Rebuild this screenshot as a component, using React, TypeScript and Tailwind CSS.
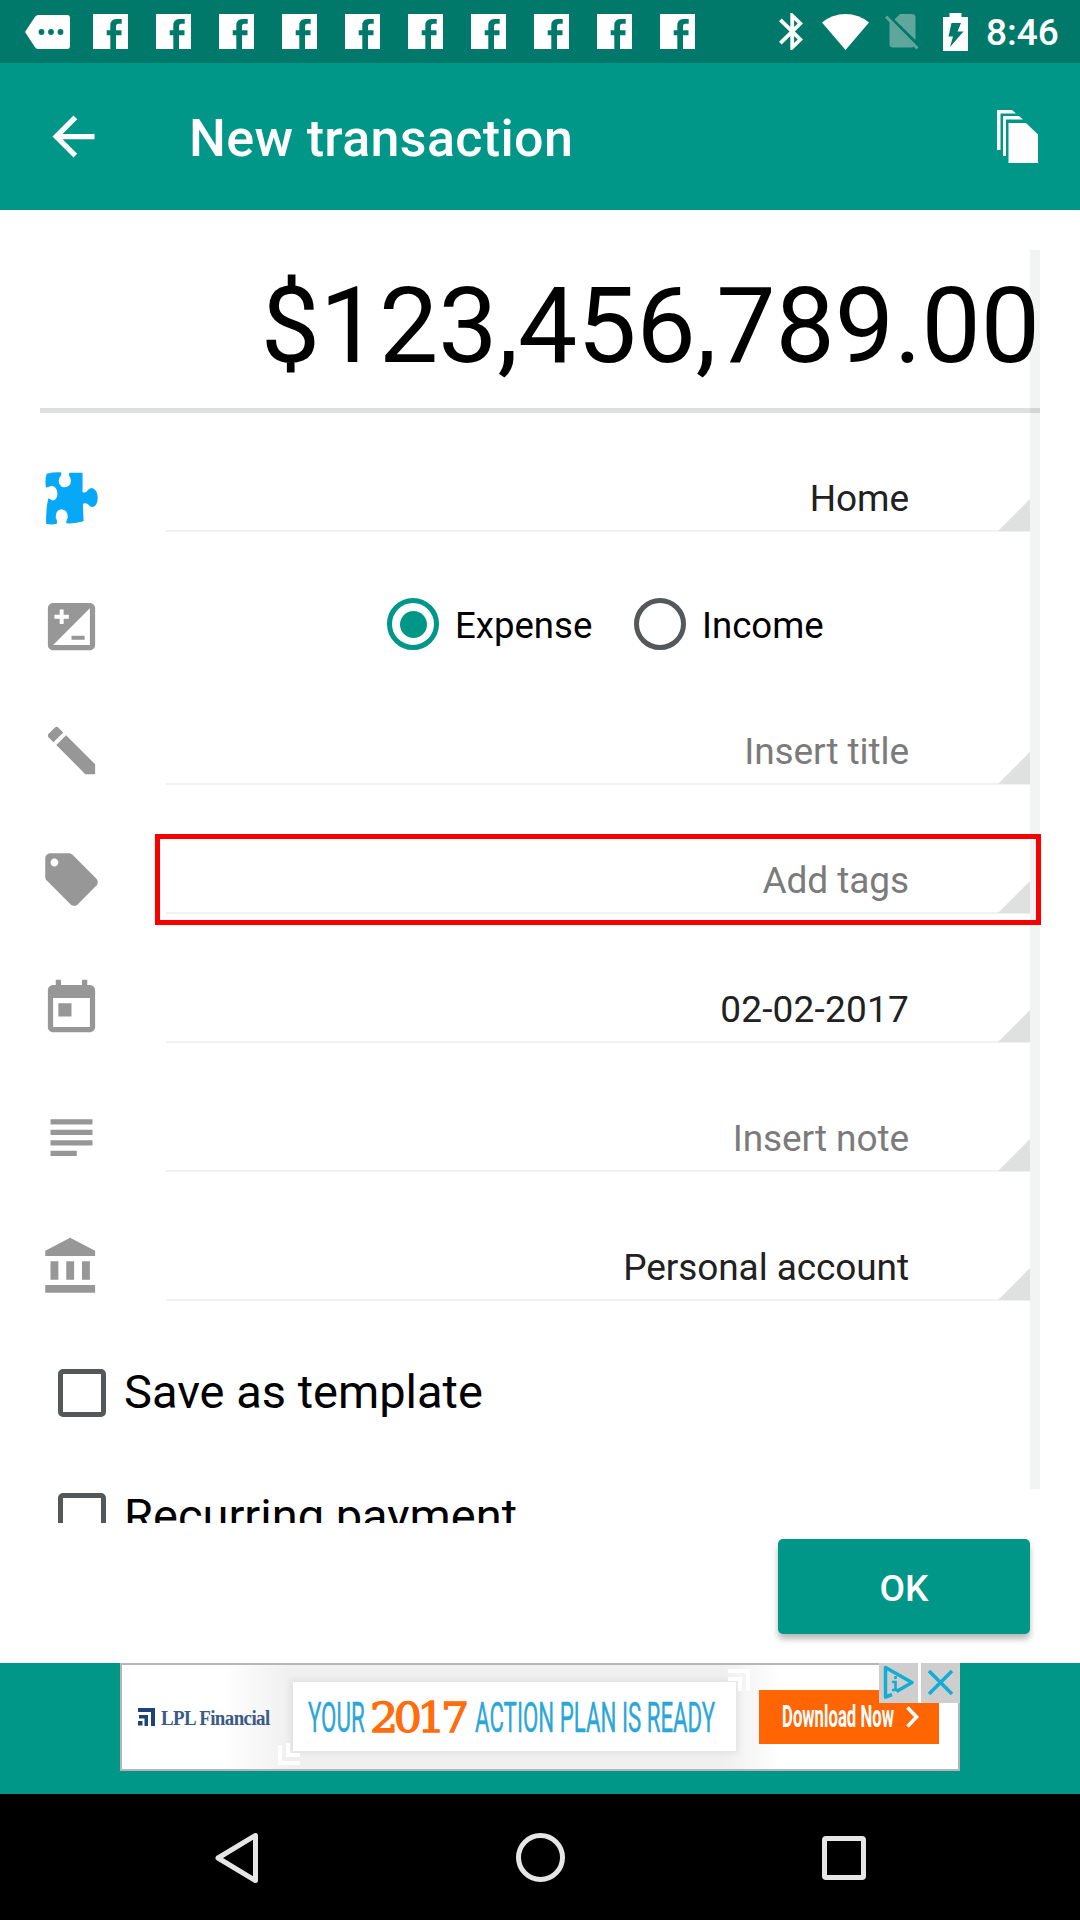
import type { ReactNode } from "react";

const GREY = "#979797";

function Glyph({ d, className = "" }: { d: string; className?: string }) {
  return (
    <svg viewBox="0 0 24 24" className={"h-[63px] w-[63px] " + className} fill={GREY}>
      <path d={d} />
    </svg>
  );
}

function FacebookIcon() {
  return (
    <svg viewBox="0 0 35 35" className="h-[35px] w-[35px]">
      <path fill="#fff" d="M0 0H35V35H23V21.3H28.5V16.3H23V12.5Q23 9.8 25.5 9.8H28.7V5H23.5Q17.3 5 17.3 11.5V16.3H13.7V21.3H17.3V35H0Z" />
    </svg>
  );
}

function StatusBar() {
  return (
    <header className="flex h-[63px] items-center bg-[#00796b] pl-[25px]">
      <svg viewBox="0 0 45 34" className="h-[34px] w-[45px]">
        <path fill="#fff" d="M13 0H42Q45 0 45 3V31Q45 34 42 34H13Q11 34 9.500 31.500L0 17L9.500 2.500Q11 0 13 0Z" />
        <g fill="#00796b">
          <circle cx="16.500" cy="17" r="2.900" />
          <circle cx="26" cy="17" r="2.900" />
          <circle cx="35.500" cy="17" r="2.900" />
        </g>
      </svg>
      <div className="ml-[23px] flex gap-[28px]">
        {Array.from({ length: 10 }, (_, i) => (
          <FacebookIcon key={i} />
        ))}
      </div>
      <svg viewBox="5 2 12.710 20" preserveAspectRatio="none" className="ml-[84px] h-[37px] w-[24px]" fill="#fff">
        <path d="M17.710 7.710L12 2h-1v7.590L6.410 5 5 6.410 10.590 12 5 17.590 6.410 19 11 14.410V22h1l5.710-5.710-4.300-4.290 4.300-4.290zM13 5.830l1.880 1.880L13 9.590V5.830zm1.880 10.460L13 18.170v-3.760l1.880 1.880z" />
      </svg>
      <svg viewBox="0 0 47 36" className="ml-[19px] h-[36px] w-[47px]" fill="#fff">
        <path d="M0 8.500Q10 0 23.500 0T47 8.500L23.500 36Z" />
      </svg>
      <svg viewBox="0 0 34 37" className="ml-[16px] h-[37px] w-[34px]" fill="#5fa69c">
        <path d="M15 1H27Q30.500 1 30.500 4.500V27L9.500 6.500Z" />
        <path d="M4.500 9L29 33.500Q28 34.500 26.500 34.500H8Q4.500 34.500 4.500 31.500Z" />
        <path d="M2 2.500L0 4.800L31.500 36.500L33.500 34.300Z" />
      </svg>
      <svg viewBox="0 0 25 38" className="ml-[24px] h-[38px] w-[25px]">
        <path fill="#fff" d="M6.500 0H18.500V4H25V38H0V4H6.500Z" />
        <path fill="#00796b" d="M8.500 10H18L14.500 18.500H20.500L7 34L10 23.500H5.500Z" />
      </svg>
      <span className="mt-[3px] ml-[18px] text-[37px] leading-[44px] font-medium text-white">8:46</span>
    </header>
  );
}

function Toolbar() {
  return (
    <div className="flex h-[147px] items-center bg-[#009688] pr-[42px] pl-[42px]">
      <svg viewBox="0 0 24 24" className="h-[63px] w-[63px]" fill="#fff">
        <path d="M20 11H7.830l5.590-5.590L12 4l-8 8 8 8 1.410-1.410L7.830 13H20v-2z" />
      </svg>
      <h1 className="ml-[84px] flex-1 pt-[5px] text-[52px] leading-[60px] font-medium tracking-[0.35px] text-white">New transaction</h1>
      <svg viewBox="0 0 41 53" className="h-[53px] w-[41px]" fill="#fff">
        <path d="M0 0H15L19 3.500H3.500V40H0Z" />
        <path d="M6 6H22L26 9.500H9V46H6Z" />
        <path d="M11.500 13H29L41 24.500V53H11.500Z" />
      </svg>
    </div>
  );
}

interface FieldProps {
  icon: ReactNode;
  value: string;
  hint?: boolean;
  highlighted?: boolean;
  height?: string;
  tracking?: string;
}

function Field({
  icon,
  value,
  hint = false,
  highlighted = false,
  height = "h-[129px]",
  tracking = "tracking-[-0.08px]",
}: FieldProps) {
  return (
    <div className={"flex items-end pr-[50px] pl-[40px] " + height}>
      <div className="mb-[3px] flex h-[63px] w-[63px] shrink-0 items-center justify-center">{icon}</div>
      <div className="relative ml-[63px] flex h-[64px] flex-1 items-end justify-end border-b-2 border-[#f1f1f1]">
        <span
          className={
            "mr-[90px] pr-[31px] pb-[9px] text-[37px] leading-[44px] " +
            tracking +
            (hint ? " text-[#7b7b7b]" : " text-[#212121]")
          }
        >
          {value}
        </span>
        <svg viewBox="0 0 32 32" className="absolute right-0 bottom-[-1px] h-[32px] w-[32px]" fill="#dfe0e0">
          <path d="M32 0V32H0Z" />
        </svg>
        {highlighted && (
          <div className="absolute right-[-11px] bottom-[-13px] z-10 h-[91px] w-[886px] border-[5px] border-[#f70000]" />
        )}
      </div>
    </div>
  );
}

function PuzzleIcon() {
  return (
    <svg viewBox="135 95 158 158" className="mt-[2px] h-[53px] w-[53px]" fill="#07a8f8">
      <path d="M140 100Q160 95 182 96Q187 103 178 112Q172 130 184 138Q195 144 206 136Q216 125 210 112Q204 104 208 97H247V155Q256 160 264 148Q274 138 284 148Q292 156 292 172Q292 190 282 198Q270 202 264 192Q256 186 248 190L250 242Q225 250 198 248Q198 242 203 230Q203 208 184 206Q166 208 167 232Q174 242 169 250Q152 253 138 249Q138 200 145 173Q153 177 158 180Q172 178 172 158Q170 138 155 136Q148 140 138 141Q134 120 140 100Z" />
    </svg>
  );
}

function CheckRow({ label }: { label: string }) {
  return (
    <label className="flex h-[124px] items-start pl-[58px]">
      <span className="h-[48px] w-[48px] shrink-0 rounded-[5px] border-[5px] border-[#54585b]" />
      <span className="mt-[-5px] ml-[18px] text-[47px] leading-[55px] whitespace-nowrap text-black">{label}</span>
    </label>
  );
}

function Form() {
  return (
    <main className="relative h-[1313px] overflow-hidden">
      <div className="ml-[40px] flex h-[203px] w-[1000px] items-end justify-end border-b-[5px] border-[#dedfdf] pb-[27px]">
        <span className="text-[105.500px] leading-[110px] tracking-[-0.1px] text-black">$123,456,789.00</span>
      </div>
      <Field height="h-[119px]" icon={<PuzzleIcon />} value="Home" />
      <div className="flex h-[124px] items-end pl-[40px]">
        <Glyph
          className="mb-[-2px]"
          d="M19 3H5c-1.100 0-2 .9-2 2v14c0 1.100.9 2 2 2h14c1.100 0 2-.9 2-2V5c0-1.100-.9-2-2-2zM5.500 7.500h2v-2H9v2h2V9H9v2H7.500V9h-2V7.500zM19 19H5L19 5v14zm-2-2v-1.500h-5V17h5z"
        />
        <div className="mb-[6px] ml-[284px] flex items-center">
          <span className="flex h-[52px] w-[52px] items-center justify-center rounded-full border-[5px] border-[#009688]">
            <span className="h-[27px] w-[27px] rounded-full bg-[#009688]" />
          </span>
          <span className="mt-[4px] ml-[16px] w-[179px] text-[36.600px] leading-[44px] text-black">Expense</span>
          <span className="h-[52px] w-[52px] rounded-full border-[5px] border-[#54585b]" />
          <span className="mt-[4px] ml-[16px] text-[36.600px] leading-[44px] text-black">Income</span>
        </div>
      </div>
      <Field
        hint
        value="Insert title"
        icon={
          <Glyph
            className="-scale-x-100"
            d="M3 17.250V21h3.750L17.810 9.940l-3.750-3.750L3 17.250zM20.710 7.040c.39-.39.39-1.020 0-1.410l-2.340-2.340c-.39-.39-1.020-.39-1.410 0l-1.830 1.830 3.750 3.750 1.830-1.830z"
          />
        }
      />
      <Field
        hint
        highlighted
        value="Add tags"
        icon={
          <Glyph d="M21.410 11.580l-9-9C12.050 2.220 11.550 2 11 2H4c-1.100 0-2 .9-2 2v7c0 .55.22 1.050.59 1.420l9 9c.36.36.86.58 1.410.58.55 0 1.050-.22 1.410-.59l7-7c.37-.36.59-.86.59-1.410 0-.55-.23-1.060-.59-1.420zM5.500 7C4.670 7 4 6.330 4 5.500S4.670 4 5.500 4 7 4.670 7 5.500 6.330 7 5.500 7z" />
        }
      />
      <Field
        value="02-02-2017"
        tracking="tracking-[0.2px]"
        icon={
          <Glyph d="M19 3h-1V1h-2v2H8V1H6v2H5c-1.110 0-1.990.9-1.990 2L3 19c0 1.100.89 2 2 2h14c1.100 0 2-.9 2-2V5c0-1.100-.9-2-2-2zm0 16H5V8h14v11zM7 10h5v5H7z" />
        }
      />
      <Field hint value="Insert note" icon={<Glyph d="M14 17H4v2h10v-2zm6-8H4v2h16V9zM4 15h16v-2H4v2zM4 5v2h16V5H4z" />} />
      <Field
        value="Personal account"
        icon={<Glyph d="M4 10v7h3v-7H4zm6 0v7h3v-7h-3zM2 22h19v-3H2v3zm14-12v7h3v-7h-3zm-4.500-9L2 6v2h19V6l-9.500-5z" />}
      />
      <div className="pt-[68px]">
        <CheckRow label="Save as template" />
        <CheckRow label="Recurring payment" />
      </div>
      <div className="absolute top-[40px] right-[40px] h-[1239px] w-[10px] bg-[#001a10]/5" />
    </main>
  );
}

function AdBanner() {
  return (
    <div className="flex h-[131px] justify-center bg-[#009688]">
      <div className="relative flex h-[108px] w-[840px] border-2 border-[#b5b6b6] bg-[linear-gradient(90deg,#fff_12%,#f0f0f0_20%,#f0f0f0_72%,#fff_79%)] text-[#2ba6d8]">
        <div className="mt-[43px] ml-[16px] flex h-[20px] w-[155px]">
          <svg viewBox="0 0 17 18" className="h-[18px] w-[17px]" fill="#1f4377">
            <path d="M0 0H17V18H13V4H0Z" />
            <path d="M1 7H10V18H6.500V10.500H1Z" />
            <path d="M0 13H4.500V17.500H0Z" />
          </svg>
          <span className="ml-[6px] origin-left scale-x-[0.945] font-['Liberation_Serif'] text-[20px] leading-[20px] font-bold tracking-[-0.6px] whitespace-nowrap text-[#3c5a86]">
            LPL Financial
          </span>
        </div>
        <div className="mt-[17px] flex h-[69px] w-[443px] bg-white pt-[13px] pl-[15px] shadow-[0_0_6px_3px_rgba(0,0,0,0.06)]">
          <span className="w-[62px] origin-left scale-x-[0.52] text-[43px] leading-[44px] whitespace-nowrap [-webkit-text-stroke:0.4px_#2ba6d8]">
            YOUR
          </span>
          <span className="w-[105px] origin-left scale-x-[1.080] font-['DejaVu_Serif'] text-[41px] leading-[46px] tracking-[-4.200px] whitespace-nowrap text-[#ff6d0c] [-webkit-text-stroke:1.300px_#ff6d0c]">
            2017
          </span>
          <span className="w-[100px] origin-left scale-x-[0.518] text-[43px] leading-[44px] whitespace-nowrap [-webkit-text-stroke:0.4px_#2ba6d8]">
            ACTION PLAN IS READY
          </span>
        </div>
        <svg viewBox="0 0 22 22" className="absolute top-[78px] left-[156px] h-[22px] w-[22px]" fill="none" stroke="#fff" strokeWidth="4">
          <path d="M2 2V20H22M10 0V12H22" />
        </svg>
        <svg viewBox="0 0 22 22" className="absolute top-[4px] left-[606px] h-[22px] w-[22px]" fill="none" stroke="#fff" strokeWidth="4">
          <path d="M0 2H20V22M0 10H12V22" />
        </svg>
        <div className="mt-[25px] ml-[23px] flex h-[54px] w-[180px] items-center bg-[#ff6502] pl-[23px]">
          <span className="w-[124px] origin-left scale-x-[0.54] text-[31px] leading-[34px] font-bold whitespace-nowrap text-white">
            Download Now
          </span>
          <svg viewBox="0 0 13 22" className="h-[22px] w-[13px]" fill="none" stroke="#fff" strokeWidth="3.600">
            <path d="M1.500 1.500L10.500 11L1.500 20.500" />
          </svg>
        </div>
        <div className="absolute -top-[2px] -right-[2px] flex h-[40px] gap-[3px] bg-white">
          <svg viewBox="0 0 39 40" className="h-[40px] w-[39px] bg-[#cecece]" fill="none" stroke="#12add6" strokeWidth="3.500">
            <path strokeLinejoin="round" d="M13 31.500L6.500 34V4.500L33 19.500L17.500 28.500" />
            <path d="M13 19H16.500V27M13 27H20M16.500 13V16" strokeWidth="2.600" />
          </svg>
          <svg viewBox="0 0 39 40" className="h-[40px] w-[39px] bg-[#cecece]" fill="none" stroke="#12add6" strokeWidth="3.500">
            <path d="M8 8L31 31M31 8L8 31" />
          </svg>
        </div>
      </div>
    </div>
  );
}

function NavBar() {
  return (
    <nav className="flex h-[126px] items-center bg-black pt-px pl-[215px]">
      <svg viewBox="0 0 43 50" className="h-[50px] w-[43px]" fill="none" stroke="#e6e6e6" strokeWidth="5" strokeLinejoin="round">
        <path d="M40.500 2.500V47.500L3 25Z" />
      </svg>
      <span className="ml-[258px] h-[49px] w-[49px] rounded-full border-[5px] border-[#e6e6e6]" />
      <span className="ml-[257px] h-[44px] w-[44px] rounded-[4px] border-[5px] border-[#e6e6e6]" />
    </nav>
  );
}

export default function App() {
  return (
    <div className="h-[1920px] w-[1080px] overflow-hidden bg-white font-['Roboto',sans-serif]">
      <StatusBar />
      <Toolbar />
      <Form />
      <footer className="flex h-[140px] justify-end pt-[16px] pr-[50px]">
        <button className="h-[95px] w-[252px] rounded-[5px] bg-[#009688] pt-[4px] text-[37px] leading-[44px] font-medium text-white shadow-[0_5px_6px_rgba(0,0,0,0.28)]">
          OK
        </button>
      </footer>
      <AdBanner />
      <NavBar />
    </div>
  );
}
